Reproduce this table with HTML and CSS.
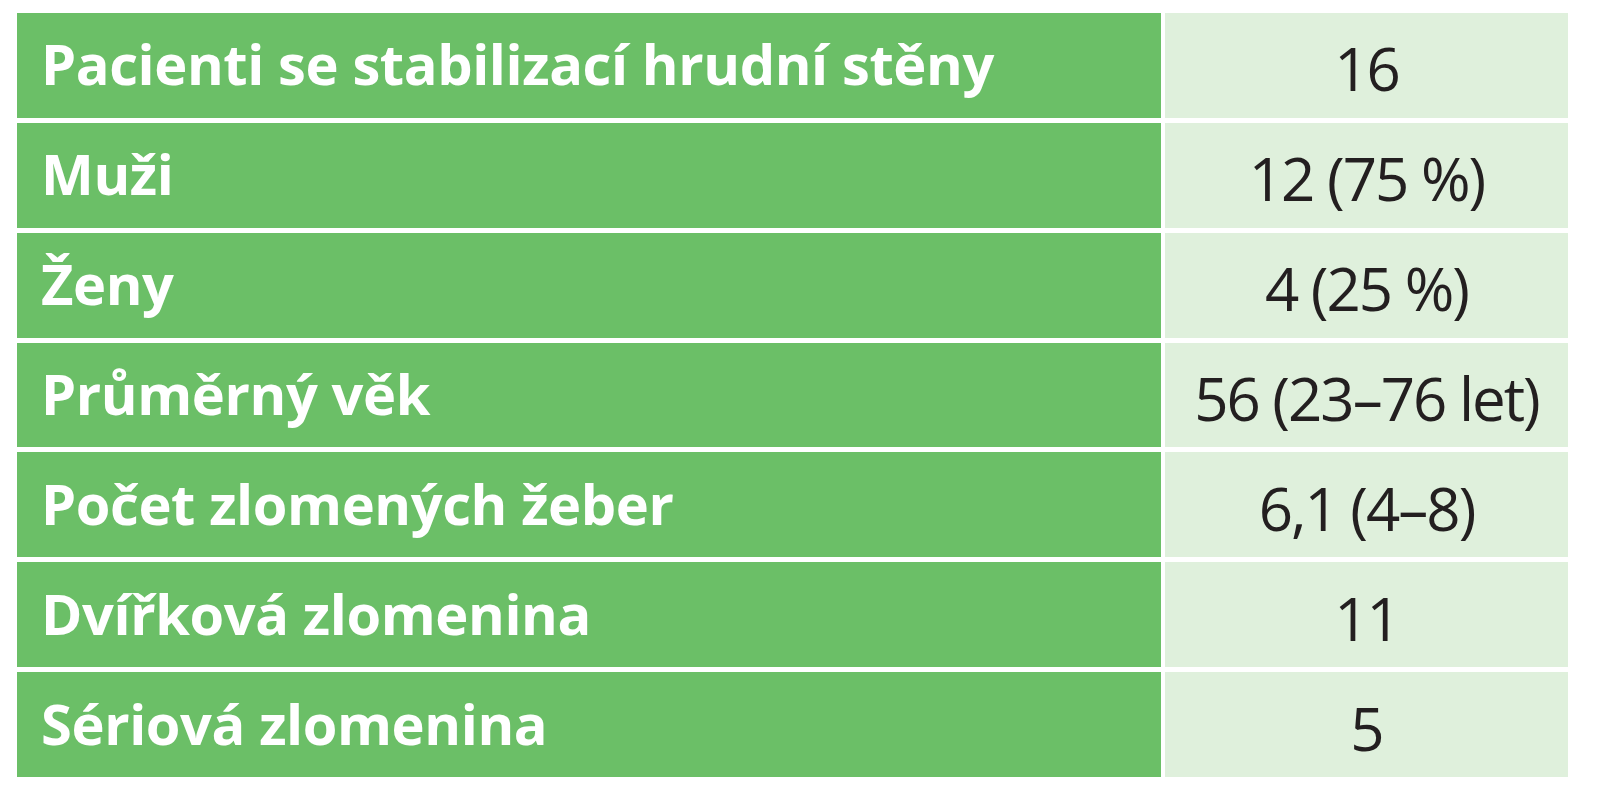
FILE: index.html
```html
<!DOCTYPE html>
<html lang="cs">
<head>
<meta charset="utf-8">
<title>Tabulka</title>
<link rel="stylesheet" href="styles.css">
</head>
<body>
<div class="table">
  <div class="label">Pacienti se stabilizací hrudní stěny</div><div class="value">16</div>
  <div class="label">Muži</div><div class="value">12 (75 %)</div>
  <div class="label">Ženy</div><div class="value">4 (25 %)</div>
  <div class="label">Průměrný věk</div><div class="value">56 (23–76 let)</div>
  <div class="label">Počet zlomených žeber</div><div class="value">6,1 (4–8)</div>
  <div class="label">Dvířková zlomenina</div><div class="value">11</div>
  <div class="label">Sériová zlomenina</div><div class="value">5</div>
</div>
</body>
</html>
```

FILE: styles.css
```css
html, body {
  margin: 0;
  padding: 0;
  background: #ffffff;
}

.table {
  display: grid;
  grid-template-columns: 1144px 403px;
  grid-template-rows: repeat(7, 1fr);
  column-gap: 4px;
  row-gap: 5px;
  height: 764px;
  margin: 13px 0 0 17px;
}

.label {
  background: #6bbf67;
  color: #ffffff;
  font-family: "Open Sans", "Liberation Sans", sans-serif;
  font-weight: 700;
  font-size: 56px;
  display: flex;
  align-items: center;
  padding: 0 0 4px 24px;
  letter-spacing: -0.4px;
}

.value {
  background: #dff0dc;
  color: #231f20;
  font-family: "Open Sans", "Liberation Sans", sans-serif;
  font-weight: 400;
  font-size: 60px;
  display: flex;
  align-items: center;
  justify-content: center;
  padding-top: 6px;
  letter-spacing: -2px;
}
```
